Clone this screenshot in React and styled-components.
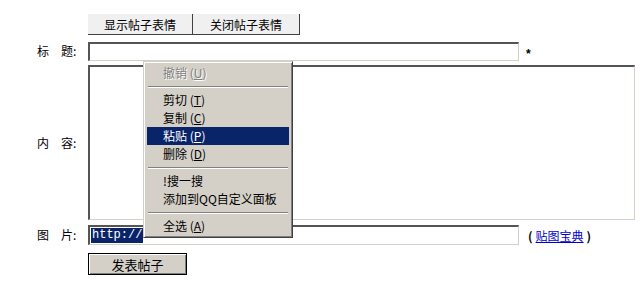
import React from 'react';
import styled, { createGlobalStyle } from 'styled-components';

const GlobalStyle = createGlobalStyle`
  html, body {
    margin: 0;
    padding: 0;
    background: #ffffff;
    overflow: hidden;
  }
  body {
    font-family: "Noto Sans CJK SC", "Liberation Sans", sans-serif;
    font-size: 12px;
    color: #000;
  }
`;

const Page = styled.div`
  position: relative;
  width: 635px;
  height: 295px;
  padding-top: 14px;
  box-sizing: border-box;
  overflow: hidden;
`;

const Row = styled.div`
  display: flex;
  align-items: ${(p) => p.$align || 'center'};
  margin-top: ${(p) => p.$gap || 0}px;
`;

const Label = styled.div`
  width: 88px;
  flex: none;
  box-sizing: border-box;
  padding-left: 37px;
  line-height: 14px;
  white-space: pre;
`;

const ToolButton = styled.button`
  width: ${(p) => p.$w}px;
  height: 21px;
  padding: 0;
  margin: 0;
  background: #f0f0f0;
  border: none;
  border-right: 1px solid #404040;
  border-bottom: 1px solid #404040;
  font-family: inherit;
  font-size: 12px;
  color: #000;
`;

const TextInput = styled.div`
  width: ${(p) => p.$w}px;
  height: ${(p) => p.$h}px;
  box-sizing: border-box;
  border-top: 2px solid #555;
  border-left: 2px solid #555;
  border-right: 1px solid #d4d0c8;
  border-bottom: 1px solid #d4d0c8;
  background: #fff;
  display: flex;
  align-items: center;
  padding-left: 1px;
`;

const Star = styled.span`
  margin-left: 7px;
  margin-top: 6px;
  font-family: "Liberation Sans", sans-serif;
  font-weight: bold;
  font-size: 12px;
`;

const Selected = styled.span`
  background: #0a246a;
  color: #fff;
  font-family: "Liberation Mono", monospace;
  font-size: 12px;
  line-height: 15px;
  padding: 0 1px;
`;

const LinkNote = styled.span`
  margin-left: 9px;
  font-weight: bold;
  font-size: 12px;
  a {
    font-weight: normal;
    color: #0000cc;
    text-decoration: underline;
    margin: 0 3px;
  }
`;

const SubmitButton = styled.button`
  width: 99px;
  height: 22px;
  margin: 0 0 0 88px;
  padding: 0;
  background: #d4d0c8;
  border: 1px solid #000;
  box-shadow: inset 1px 1px 0 #fff, inset -1px -1px 0 #808080;
  font-family: inherit;
  font-size: 13px;
  color: #000;
`;

const Menu = styled.div`
  position: absolute;
  left: 143px;
  top: 61px;
  width: 150px;
  box-sizing: border-box;
  background: #d4d0c8;
  border-top: 1px solid #d4d0c8;
  border-left: 1px solid #d4d0c8;
  border-right: 1px solid #404040;
  border-bottom: 1px solid #404040;
  box-shadow: inset 1px 1px 0 #fff, inset -1px -1px 0 #808080;
  padding: 2px 3px 2px 3px;
`;

const MenuItem = styled.div`
  height: 18px;
  line-height: 18px;
  padding-left: 16px;
  color: ${(p) => (p.$disabled ? '#808080' : p.$active ? '#fff' : '#000')};
  background: ${(p) => (p.$active ? '#0a246a' : 'transparent')};
  text-shadow: ${(p) => (p.$disabled ? '1px 1px 0 #fff' : 'none')};
  white-space: nowrap;
  u {
    text-decoration: underline;
  }
`;

const Separator = styled.div`
  height: 9px;
  display: flex;
  flex-direction: column;
  justify-content: center;
  &::before {
    content: '';
    display: block;
    height: 1px;
    background: #808080;
    margin: 0 1px;
  }
  &::after {
    content: '';
    display: block;
    height: 1px;
    background: #fff;
    margin: 0 1px;
  }
`;

const Item = ({ text, k, ...rest }) => (
  <MenuItem {...rest}>
    {text}
    {k && (
      <>
        {' '}(<u>{k}</u>)
      </>
    )}
  </MenuItem>
);

export default function App() {
  return (
    <>
      <GlobalStyle />
      <Page>
        <Row>
          <Label />
          <ToolButton $w={105}>显示帖子表情</ToolButton>
          <ToolButton $w={107}>关闭帖子表情</ToolButton>
        </Row>
        <Row $gap={6}>
          <Label>标　题:</Label>
          <TextInput $w={431} $h={19} />
          <Star>*</Star>
        </Row>
        <Row $gap={4}>
          <Label>内　容:</Label>
          <TextInput $w={560} $h={155} />
        </Row>
        <Row $gap={5}>
          <Label>图　片:</Label>
          <TextInput $w={431} $h={20}>
            <Selected>http://</Selected>
          </TextInput>
          <LinkNote>
            (<a href="#">贴图宝典</a>)
          </LinkNote>
        </Row>
        <Row $gap={8}>
          <SubmitButton>发表帖子</SubmitButton>
        </Row>

        <Menu>
          <Item text="撤销" k="U" $disabled />
          <Separator />
          <Item text="剪切" k="T" />
          <Item text="复制" k="C" />
          <Item text="粘贴" k="P" $active />
          <Item text="删除" k="D" />
          <Separator />
          <Item text="!搜一搜" />
          <Item text="添加到QQ自定义面板" />
          <Separator />
          <Item text="全选" k="A" />
        </Menu>
      </Page>
    </>
  );
}
